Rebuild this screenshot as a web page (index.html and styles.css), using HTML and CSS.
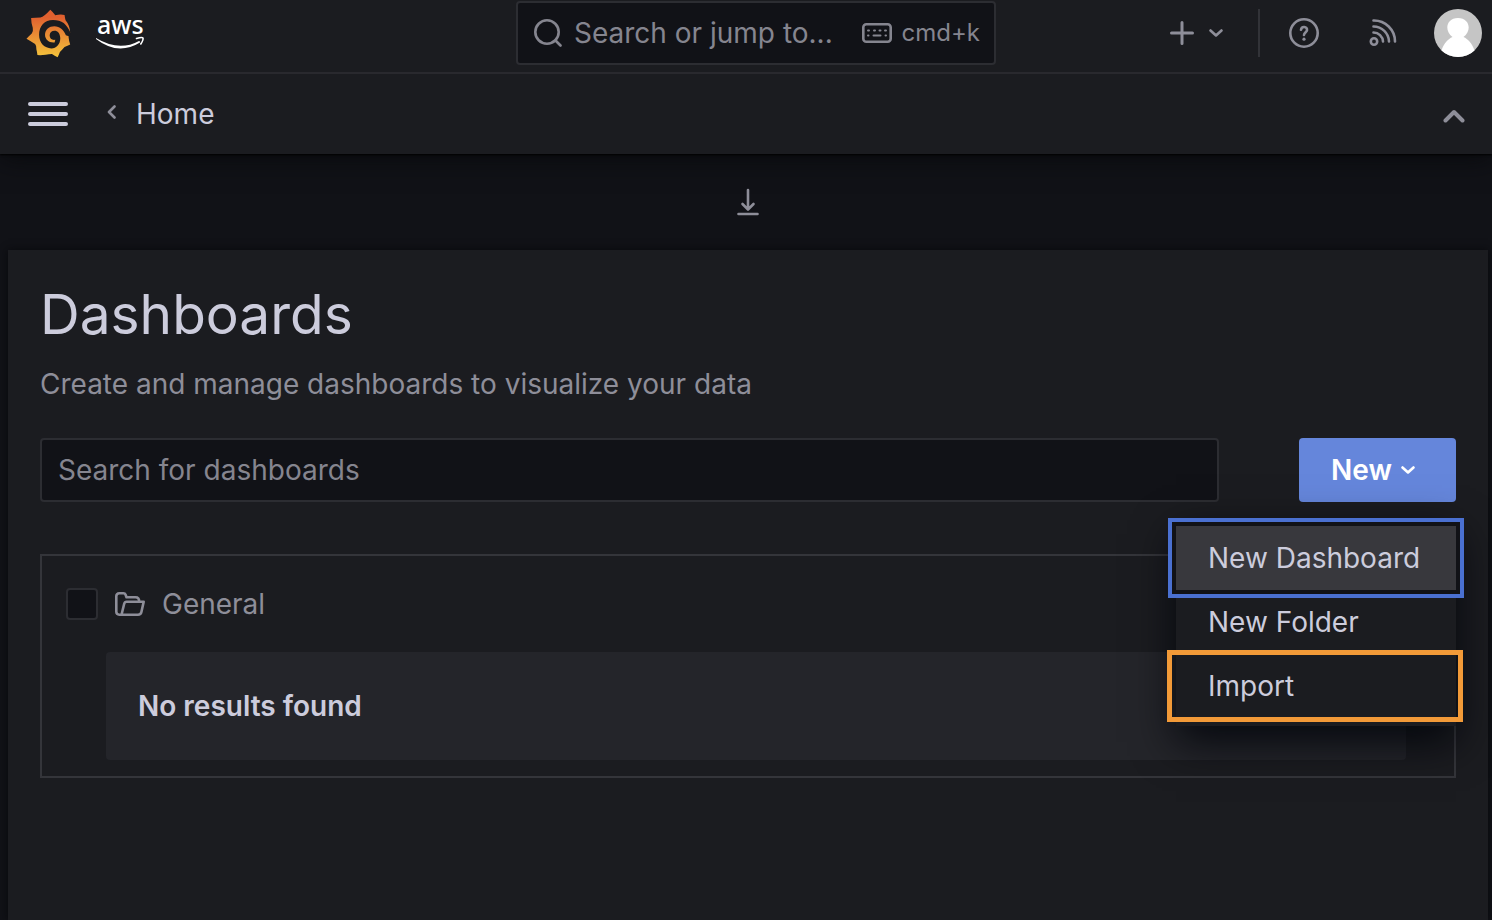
FILE: index.html
```html
<!DOCTYPE html>
<html lang="en">
<head>
<meta charset="utf-8">
<title>Dashboards</title>
<meta name="viewport" content="width=device-width, initial-scale=1">
<link rel="stylesheet" href="styles.css">
</head>
<body>
<header class="header">
  <div class="topbar">
    <div class="brand">
      <a href="#" class="logo-link" aria-label="Grafana">
        <svg class="grafana" viewBox="77 25 135 148" aria-hidden="true">
          <defs><linearGradient id="flame" gradientUnits="userSpaceOnUse" x1="0" y1="50" x2="0" y2="172"><stop offset="0" stop-color="#e0602f"/><stop offset="1" stop-color="#f4c53c"/></linearGradient></defs>
          <path fill="url(#flame)" d="M150 27Q158 34 165 44Q180 40 193 43Q194 51 196 59Q209 74 210 97L205 109Q206 121 210 132Q202 135 193 140Q186 148 179 155Q176 163 172 171Q163 166 155 161Q145 161 136 163Q123 165 111 164Q110 154 108 147Q109 137 104 131Q92 123 78 115Q85 107 94 99Q99 91 97 82Q92 66 92 52Q107 51 120 51Q132 47 150 27Z"/>
          <path class="swirl" d="M211 97C200 70 185 58 158 58C133 58 116 76 116 103C116 128 133 144 153 144C169 144 181 130 180 112C179 99 172 91 163 91C154 91 148 97 148 105C148 114 155 120 165 118L163 126C147 128 134 118 134 103C134 87 147 77 162 77C179 77 190 88 197 104L214 110Z"/>
        </svg>
      </a>
      <a href="#" class="logo-link" aria-label="AWS">
        <svg class="aws" viewBox="0 0 50 34" aria-hidden="true">
          <text x="1" y="18">aws</text>
          <path d="M0 22Q23 36 43 25Q44.500 25 44 26.500Q22 40 0 23Z"/>
          <path class="tip" d="M40.500 22.500Q46 21 47 22Q47.500 24 44.800 28"/>
        </svg>
      </a>
    </div>
    <button class="jump" type="button">
      <svg class="icon28" viewBox="0 0 28 28" aria-hidden="true"><circle cx="13" cy="13" r="11.7"/><path d="M21.500 21.500L26.500 26.500"/></svg>
      <span class="jump-label">Search or jump to...</span>
      <svg class="keyboard" viewBox="0 0 30 20" aria-hidden="true"><rect x="1.300" y="1.300" width="27.400" height="17.400" rx="3"/><path class="keys" d="M6 7.500h1M12 7.500h1M17.500 7.500h1M23 7.500h1M6 12.500h.5M11.500 12.500h7M23.500 12.500h.5"/></svg>
      <span class="shortcut">cmd+k</span>
    </button>
    <div class="actions">
      <button class="icon-button add" type="button" aria-label="New">
        <svg class="plus" viewBox="0 0 24 24" aria-hidden="true"><path d="M12 1.500v21M1.500 12h21"/></svg>
        <svg class="chevron" viewBox="0 0 14 8" aria-hidden="true"><path d="M1.500 1.500L7 6.500L12.500 1.500"/></svg>
      </button>
      <span class="divider"></span>
      <button class="icon-button help" type="button" aria-label="Help">
        <svg class="icon30" viewBox="0 0 30 30" aria-hidden="true"><circle cx="15" cy="15" r="13.700"/><path d="M12 11.800C12.500 7.800 18.500 8.300 18 12.300C17.700 14.200 15.200 14.500 15 17"/><circle class="dot" cx="15" cy="21.200" r="1.600"/></svg>
      </button>
      <button class="icon-button news" type="button" aria-label="News">
        <svg class="icon28" viewBox="0 0 28 28" aria-hidden="true"><circle cx="5" cy="22.500" r="3.200"/><path d="M4.500 1.500A21 21 0 0 1 26 22.500M4.500 7.500A15.500 15.500 0 0 1 20 22.500M4.500 13.500A9.500 9.500 0 0 1 14 22.500"/></svg>
      </button>
      <button class="icon-button" type="button" aria-label="Profile">
        <svg class="avatar" viewBox="0 0 48 48" aria-hidden="true"><circle cx="24" cy="24" r="24" fill="#c5c5c5"/><path fill="#fff" d="M7.500 41.400C10 34 14 30 18.500 28C10 22 12 9 24 9C36 9 38 22 29.500 28C34 30 38 34 40.500 41.400A24 24 0 0 1 7.500 41.400Z"/></svg>
      </button>
    </div>
  </div>
  <nav class="crumbs" aria-label="Breadcrumb">
    <button class="icon-button" type="button" aria-label="Open menu"><svg class="burger" viewBox="0 0 40 24" aria-hidden="true"><path d="M2 2h36M2 12h36M2 22h36"/></svg></button>
    <svg class="back" viewBox="0 0 9 14" aria-hidden="true"><path d="M7.500 1.500L2 7L7.500 12.500"/></svg>
    <a class="home" href="#">Home</a>
    <button class="icon-button collapse" type="button" aria-label="Collapse"><svg class="up" viewBox="0 0 22 14" aria-hidden="true"><path d="M2.500 11.500L11 3L19.500 11.500"/></svg></button>
  </nav>
</header>
<div class="dock">
  <button class="icon-button" type="button" aria-label="Expand"><svg class="down" viewBox="0 0 22 28" aria-hidden="true"><path d="M11 2V21M5.500 16L11 21.500L16.500 16M1.500 26h19"/></svg></button>
</div>
<main class="page">
  <h1 class="title">Dashboards</h1>
  <p class="subtitle">Create and manage dashboards to visualize your data</p>
  <div class="toolbar">
    <input class="search" type="text" placeholder="Search for dashboards" aria-label="Search for dashboards">
    <div class="new-wrap">
      <button class="new" type="button" aria-haspopup="menu" aria-expanded="true">New
        <svg class="chevron" viewBox="0 0 14 8" aria-hidden="true"><path d="M1.500 1.500L7 6.500L12.500 1.500"/></svg>
      </button>
      <div class="menu" role="menu">
        <button class="item focused" type="button" role="menuitem">New Dashboard</button>
        <button class="item" type="button" role="menuitem">New Folder</button>
        <button class="item marked" type="button" role="menuitem">Import</button>
      </div>
    </div>
  </div>
  <section class="results">
    <div class="folder">
      <input class="check" type="checkbox" id="general">
      <svg class="folder-icon" viewBox="0 0 30 24" aria-hidden="true"><path d="M6.500 22.700H4.300Q1.300 22.700 1.300 19.700V4.300Q1.300 1.300 4.300 1.300H8.500Q10 1.300 10.600 2.800L11.500 5.300H20.500Q24.200 5.300 24.200 9.800M6.500 22.700L9.200 11.800Q9.700 9.800 11.500 9.800H28.700L26.400 20Q25.800 22.700 23 22.700H6.500"/></svg>
      <label for="general">General</label>
    </div>
    <div class="empty">No results found</div>
  </section>
</main>
</body>
</html>
```

FILE: styles.css
```css
* { box-sizing: border-box; }
body {
  margin: 0;
  min-height: 100vh;
  display: flex;
  flex-direction: column;
  background: #111217;
  color: #ccccdc;
  font: 400 28px/44px Inter, "Liberation Sans", sans-serif;
}
button, input { font: inherit; color: inherit; }
svg { display: block; flex: none; fill: none; stroke: currentColor; stroke-width: 2.600; stroke-linecap: round; stroke-linejoin: round; }

.header { position: relative; background: #1b1c20; box-shadow: 0 1px 2px #000, 0 4px 24px #08090c; }
.topbar {
  display: grid;
  grid-template-columns: 1fr 480px 1fr;
  align-items: start;
  height: 74px;
  padding: 1px 6px 0 26px;
  border-bottom: 2px solid #29292e;
}
.brand, .actions { display: flex; align-items: center; height: 64px; }
.brand { gap: 25px; }
.logo-link { display: block; }
.grafana { width: 45px; height: 49px; stroke: none; }
.swirl { fill: #1b1c20; }
.aws { width: 50px; height: 34px; overflow: visible; fill: #fff; stroke: none; font: 500 25px/34px "Noto Sans", sans-serif; }
.tip { fill: none; stroke: #fff; stroke-width: 1.600; }

.jump {
  display: flex;
  align-items: center;
  height: 64px;
  padding: 0 14px 0 16px;
  border: 2px solid #2c2d32;
  border-radius: 4px;
  background: #111217;
  color: #85858f;
  text-align: left;
}
.jump-label { flex: 1; margin-left: 12px; white-space: nowrap; }
.shortcut { margin-left: 10px; font-size: 24px; }
.keyboard { width: 30px; height: 20px; }
.keys { stroke-width: 2; }
.icon28 { width: 28px; height: 28px; }
.icon30 { width: 30px; height: 30px; }
.dot { fill: currentColor; stroke: none; }

.actions { justify-content: flex-end; padding-right: 4px; color: #8e8e99; }
.icon-button { display: flex; align-items: center; padding: 0; border: 0; background: none; }
.add { gap: 15px; }
.plus { width: 24px; height: 24px; stroke-width: 3; }
.chevron { width: 14px; height: 8px; }
.divider { width: 2px; height: 48px; margin: 0 29px 0 35px; background: #323338; }
.news { margin: 0 37px 0 50px; }
.avatar { width: 48px; height: 48px; stroke: none; }

.crumbs { display: flex; align-items: center; height: 80px; padding: 0 27px 0 28px; }
.burger { width: 40px; height: 24px; stroke-width: 4; }
.back { width: 9px; height: 14px; margin: 0 20px 4px 39px; color: #8e8e99; }
.home { color: inherit; text-decoration: none; }
.collapse { margin: 4px 0 0 auto; color: #8e8e99; }
.up { width: 22px; height: 14px; stroke-width: 4; }

.dock { display: flex; justify-content: center; padding: 34px 0 34px 4px; color: #8e8e99; }
.down { width: 22px; height: 28px; }

.page {
  flex: 1;
  margin: 0 4px 0 8px;
  padding: 32px;
  background: #1b1c20;
  box-shadow: 0 0 8px #08090c;
}
.title { margin: 0; font-size: 55px; font-weight: 400; line-height: 64px; }
.subtitle { margin: 16px 0 32px; color: #8e8e99; }
.toolbar { display: flex; gap: 80px; }
.search {
  flex: 1;
  min-width: 0;
  height: 64px;
  padding: 0 16px;
  border: 2px solid #2c2d32;
  border-radius: 4px;
  background: #111217;
}
.search::placeholder { color: #85858f; opacity: 1; }
.new-wrap { position: relative; }
.new {
  display: flex;
  align-items: center;
  gap: 9px;
  height: 64px;
  padding: 0 41px 0 32px;
  border: 0;
  border-radius: 4px;
  background: #6586db;
  color: #fff;
  font-weight: 600;
}
.menu {
  position: absolute;
  z-index: 2;
  top: 80px;
  right: 0;
  width: 280px;
  padding: 8px 0;
  background: #1b1c20;
  box-shadow: 0 16px 40px rgba(1, 4, 9, .85);
}
.item {
  position: relative;
  display: block;
  width: 100%;
  height: 64px;
  padding: 0 32px;
  border: 0;
  background: none;
  text-align: left;
  white-space: nowrap;
}
.focused { background: #38383d; box-shadow: 0 0 0 4px #111217, 0 0 0 8px #4a70d1; }
.marked::after {
  content: "";
  position: absolute;
  inset: -4px -7px -4px -9px;
  border: 5px solid #f29a38;
}

.results { margin-top: 52px; padding: 24px 48px 16px 24px; border: 2px solid #34353a; }
.folder { display: flex; align-items: center; height: 48px; color: #8e8e99; }
.check {
  appearance: none;
  width: 32px;
  height: 32px;
  margin: 0 17px 0 0;
  border: 2px solid #2c2d32;
  border-radius: 4px;
  background: #111217;
}
.folder-icon { width: 30px; height: 24px; margin-right: 17px; }
.empty { margin: 24px 0 0 40px; padding: 32px; border-radius: 4px; background: #24252a; font-weight: 600; }
```
